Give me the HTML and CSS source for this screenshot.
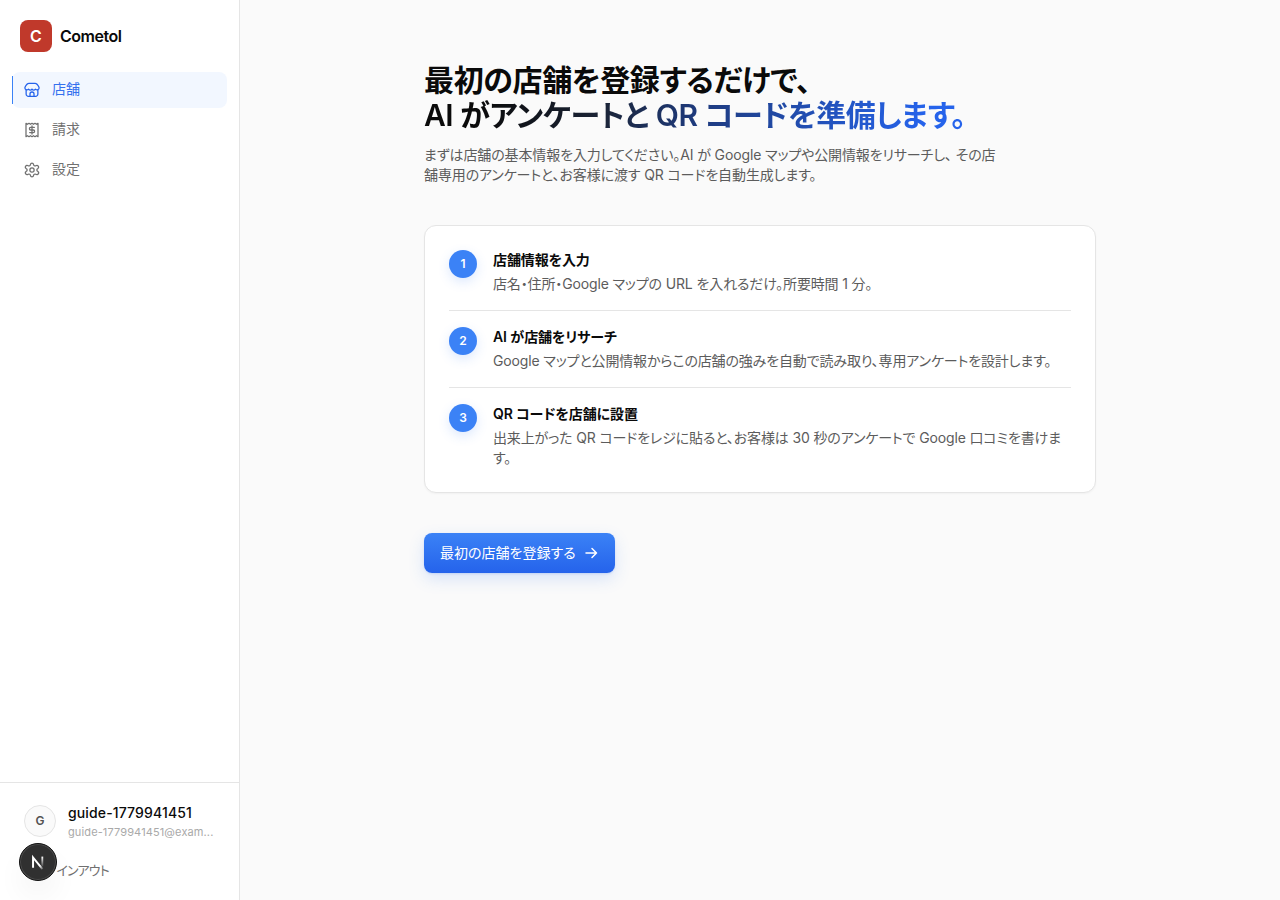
FILE: index.html
```html
<!DOCTYPE html>
<html lang="ja">
<head>
<meta charset="utf-8">
<title>Cometol</title>
<link rel="stylesheet" href="styles.css">
</head>
<body>
<div class="app">
  <aside class="sidebar">
    <div class="brand"><span class="logo">C</span><span class="brand-name">Cometol</span></div>
    <nav class="nav">
      <a class="nav-item active">
        <svg class="icon" viewBox="0 0 24 24"><path d="M3.200 12.500V18A3.500 3.500 0 0 0 6.700 21.500h10.600a3.500 3.500 0 0 0 3.500-3.500v-5.500"/><path d="M7.500 2h9c3 0 4.500 2.500 6 6 .8 3.500-3 5-5.200 2.700-1.500 2-4 2-5.300 0-1.300 2-3.800 2-5.300 0C4.500 13 .7 11.500 1.500 8 3 4.500 4.500 2 7.500 2z"/><path d="M9 21.500V18a3 3 0 0 1 6 0v3.500"/></svg>
        <span>店舗</span>
      </a>
      <a class="nav-item">
        <svg class="icon" viewBox="0 0 24 24"><path d="M3 2l2.200 1.500L7.500 2l2.200 1.500L12 2l2.200 1.500L16.500 2l2.200 1.500L21 2v20l-2.300-1.500-2.200 1.500-2.300-1.500L12 22l-2.300-1.500L7.500 22l-2.300-1.500L3 22z"/><path d="M15.500 8.200H10a1.900 1.900 0 0 0 0 3.800h4a1.900 1.900 0 0 1 0 3.800H8.500M12 6v12"/></svg>
        <span>請求</span>
      </a>
      <a class="nav-item">
        <svg class="icon" viewBox="0 0 24 24"><path d="M9.700 3.600a2.340 2.340 0 0 1 4.600 0 2.340 2.340 0 0 0 3.500 2 2.500 2.500 0 0 1 3 4.200 2.340 2.340 0 0 0 0 4.400 2.500 2.500 0 0 1-3 4.200 2.340 2.340 0 0 0-3.500 2 2.340 2.340 0 0 1-4.600 0 2.340 2.340 0 0 0-3.500-2 2.500 2.500 0 0 1-3-4.200 2.340 2.340 0 0 0 0-4.400 2.500 2.500 0 0 1 3-4.200 2.340 2.340 0 0 0 3.500-2z"/><circle cx="12" cy="12" r="3.200"/></svg>
        <span>設定</span>
      </a>
    </nav>
    <div class="account">
      <div class="profile">
        <span class="avatar">G</span>
        <div class="who"><div class="user-name">guide-1779941451</div><div class="user-mail">guide-1779941451@exam...</div></div>
      </div>
      <div class="signout"><span class="initial">サ</span>インアウト</div>
    </div>
  </aside>
  <main class="main">
    <div class="content">
      <h1 class="title">最初の店舗を登録するだけで、<br><span class="gradient">AI がアンケートと QR コードを準備します。</span></h1>
      <p class="lead">まずは店舗の基本情報を入力してください。AI が Google マップや公開情報をリサーチし、 その店<br>舗専用のアンケートと、お客様に渡す QR コードを自動生成します。</p>
      <ol class="steps">
        <li class="step"><span class="num">1</span><div><h2 class="step-title">店舗情報を入力</h2><p class="step-text">店名・住所・Google マップの URL を入れるだけ。所要時間 1 分。</p></div></li>
        <li class="step"><span class="num">2</span><div><h2 class="step-title">AI が店舗をリサーチ</h2><p class="step-text">Google マップと公開情報からこの店舗の強みを自動で読み取り、専用アンケートを設計します。</p></div></li>
        <li class="step"><span class="num">3</span><div><h2 class="step-title">QR コードを店舗に設置</h2><p class="step-text">出来上がった QR コードをレジに貼ると、お客様は 30 秒のアンケートで Google 口コミを書けま<br>す。</p></div></li>
      </ol>
      <a class="cta"><span>最初の店舗を登録する</span><svg class="arrow" viewBox="0 0 16 16"><path d="M3 8h10.500M9 3.500 13.500 8 9 12.500"/></svg></a>
    </div>
  </main>
</div>
<div class="dev-badge"><svg class="dev-mark" viewBox="0 0 40 40"><defs><linearGradient id="fade" x1="0" y1="0" x2="0" y2="1"><stop offset="0" stop-color="#fff"/><stop offset="1" stop-color="#fff" stop-opacity="0.100"/></linearGradient><linearGradient id="tail" gradientUnits="userSpaceOnUse" x1="15" y1="14" x2="26" y2="28"><stop offset="0.700" stop-color="#fff"/><stop offset="1" stop-color="#fff" stop-opacity="0.100"/></linearGradient></defs><path d="M14.500 26.500V15L25 28" fill="none" stroke="url(#tail)" stroke-width="2.200"/><rect x="23.800" y="14" width="2" height="11" fill="url(#fade)"/></svg></div>
</body>
</html>
```
FILE: styles.css
```css
* { box-sizing: border-box; }
body {
  margin: 0;
  font: 400 14px/20px Inter, "Noto Sans CJK JP", sans-serif;
  font-feature-settings: "palt";
  color: #0a0a0a;
  background: #fafafa;
}
h1, h2, p, ol { margin: 0; padding: 0; }
.app { display: flex; height: 900px; }
.sidebar {
  width: 240px;
  display: flex;
  flex-direction: column;
  background: #fff;
  border-right: 1px solid #e5e5e5;
}
.brand { display: flex; align-items: center; gap: 8px; height: 72px; padding: 0 20px; }
.logo {
  display: grid;
  place-items: center;
  width: 32px;
  height: 32px;
  border-radius: 8px;
  background: #c0392b;
  color: #fff;
  font-size: 16px;
  font-weight: 600;
}
.brand-name { font-size: 16px; font-weight: 600; letter-spacing: -0.5px; }
.nav { flex: 1; display: flex; flex-direction: column; gap: 4px; padding: 0 12px; }
.nav-item {
  position: relative;
  display: flex;
  align-items: center;
  gap: 12px;
  height: 36px;
  padding: 0 12px;
  border-radius: 8px;
  color: #707070;
}
.nav-item span { margin-top: -2px; }
.active { color: #3470ee; background: #f2f7ff; }
.active::before {
  content: "";
  position: absolute;
  left: 0;
  top: 4px;
  width: 1px;
  height: 28px;
  background: #3b82f6;
}
.icon { width: 16px; height: 16px; fill: none; stroke: currentColor; stroke-width: 1.9; stroke-linecap: round; stroke-linejoin: round; }
.active .icon { color: #2563eb; }
.account { height: 118px; padding: 22px 24px 0; border-top: 1px solid #e5e5e5; }
.profile { display: flex; align-items: center; gap: 12px; height: 32px; }
.avatar {
  display: grid;
  place-items: center;
  flex: none;
  width: 32px;
  height: 32px;
  border: 1px solid #e5e5e5;
  border-radius: 50%;
  background: #fafafa;
  color: #525252;
  font-size: 12px;
  font-weight: 600;
}
.who { min-width: 0; flex: 1; }
.user-name { font-weight: 500; line-height: 20px; letter-spacing: 0.13px; }
.user-mail { padding-top: 1px; font-size: 11px; line-height: 16px; letter-spacing: 0.12px; color: #a9a9a9; white-space: nowrap; }
.signout { padding: 23px 0 0 17px; font-size: 13px; line-height: 20px; letter-spacing: -0.9px; color: #707070; }
.initial { margin-right: 4px; }
.main { flex: 1; display: flex; justify-content: center; }
.content { width: 672px; padding-top: 63px; }
.title { font-size: 30px; font-weight: 600; line-height: 35px; letter-spacing: -0.36px; }
.gradient {
  letter-spacing: -0.48px;
  background: linear-gradient(100deg, #0a0a0a 10%, #1b2436 33%, #1e3a7c 50%, #2563eb 92%);
  -webkit-background-clip: text;
  background-clip: text;
  color: transparent;
}
.lead { margin-top: 12px; color: #5c5c5c; white-space: nowrap; letter-spacing: -0.12px; }
.steps {
  margin-top: 40px;
  padding: 24px;
  list-style: none;
  border: 1px solid #e5e5e5;
  border-radius: 12px;
  background: #fff;
  box-shadow: 0 1px 2px rgba(0, 0, 0, 0.04);
}
.step { display: flex; gap: 16px; }
.step + .step { margin-top: 16px; padding-top: 16px; border-top: 1px solid #e5e5e5; }
.num {
  display: grid;
  place-items: center;
  flex: none;
  width: 28px;
  height: 28px;
  border-radius: 50%;
  background: #3b82f6;
  color: #fff;
  font-size: 12px;
  font-weight: 600;
  box-shadow: 0 4px 12px rgba(59, 130, 246, 0.18);
}
.step-title { font-size: 14px; font-weight: 600; line-height: 20px; letter-spacing: -0.1px; }
.step-text { margin-top: 4px; color: #5c5c5c; white-space: nowrap; letter-spacing: -0.14px; }
.cta {
  display: inline-flex;
  align-items: center;
  justify-content: space-between;
  width: 191px;
  height: 40px;
  margin-top: 40px;
  padding: 0 16px;
  border-radius: 8px;
  color: #fff;
  background: linear-gradient(#3b82f6, #2563eb);
  box-shadow: 0 1px 2px rgba(37, 99, 235, 0.15), 0 6px 16px rgba(59, 130, 246, 0.18);
}
.arrow { width: 16px; height: 16px; fill: none; stroke: currentColor; stroke-width: 1.5; stroke-linecap: round; stroke-linejoin: round; }
.dev-badge {
  position: fixed;
  left: 19px;
  top: 843px;
  width: 38px;
  height: 38px;
  border: 1px solid #111;
  border-radius: 50%;
  background: #303030;
  box-shadow: inset 0 0 0 1px #4b4b4b, 0 16px 32px -8px rgba(0, 0, 0, 0.12);
}
.dev-mark { display: block; width: 36px; height: 36px; }
```
